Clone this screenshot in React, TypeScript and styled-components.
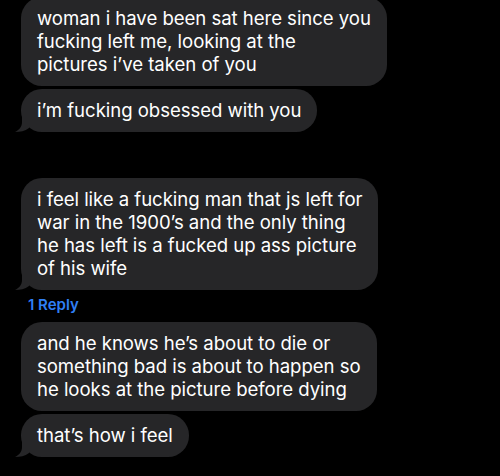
import React from "react";
import styled, { createGlobalStyle } from "styled-components";

const GlobalStyle = createGlobalStyle`
  html, body {
    margin: 0;
    padding: 0;
    background: #000;
  }
  body {
    font-family: Inter, "Liberation Sans", Arial, sans-serif;
    -webkit-font-smoothing: antialiased;
  }
`;

const Thread = styled.div`
  width: 500px;
  height: 476px;
  overflow: hidden;
  background: #000;
  display: flex;
  flex-direction: column;
  align-items: flex-start;
  padding-left: 21px;
  box-sizing: border-box;
`;

// first bubble is cut off by the top of the screen
const Group = styled.div<{ gap: number; offset?: number }>`
  display: flex;
  flex-direction: column;
  align-items: flex-start;
  gap: 3px;
  margin-top: ${({ gap }) => gap}px;
`;

const Bubble = styled.div`
  position: relative;
  background: #262628;
  color: #fff;
  border-radius: 21px;
  padding: 10px 16px;
  font-size: 18.6px;
  line-height: 23px;
  letter-spacing: -0.05px;
  white-space: nowrap;
`;

const Line = styled.span`
  display: block;
`;

const Tail = styled.svg`
  position: absolute;
  left: -7px;
  bottom: 0;
  width: 22px;
  height: 18px;
`;

const ReplyLink = styled.div`
  color: #2f7ff4;
  font-size: 15px;
  font-weight: 600;
  line-height: 18px;
  padding-left: 7px;
  margin: 6px 0 8px;
`;

type Msg = { lines: string[]; tail?: boolean };

const Message: React.FC<Msg> = ({ lines, tail }) => (
  <Bubble>
    {tail && (
      <Tail viewBox="0 0 22 18">
        <path
          d="M8 0 L8 8 C8 13 5 16 1 18 C6 18 11 17 15 14 L15 0 Z"
          fill="#262628"
        />
      </Tail>
    )}
    {lines.map((l, i) => (
      <Line key={i}>{l}</Line>
    ))}
  </Bubble>
);

export default function App() {
  return (
    <>
      <GlobalStyle />
      <Thread>
        <Group gap={-3}>
          <Message
            lines={[
              "woman i have been sat here since you",
              "fucking left me, looking at the",
              "pictures i\u2019ve taken of you",
            ]}
          />
          <Message lines={["i\u2019m fucking obsessed with you"]} tail />
        </Group>
        <Group gap={46}>
          <Message
            lines={[
              "i feel like a fucking man that js left for",
              "war in the 1900\u2019s and the only thing",
              "he has left is a fucked up ass picture",
              "of his wife",
            ]}
            tail
          />
        </Group>
        <ReplyLink>1 Reply</ReplyLink>
        <Group gap={0}>
          <Message
            lines={[
              "and he knows he\u2019s about to die or",
              "something bad is about to happen so",
              "he looks at the picture before dying",
            ]}
          />
          <Message lines={["that\u2019s how i feel"]} tail />
        </Group>
      </Thread>
    </>
  );
}
